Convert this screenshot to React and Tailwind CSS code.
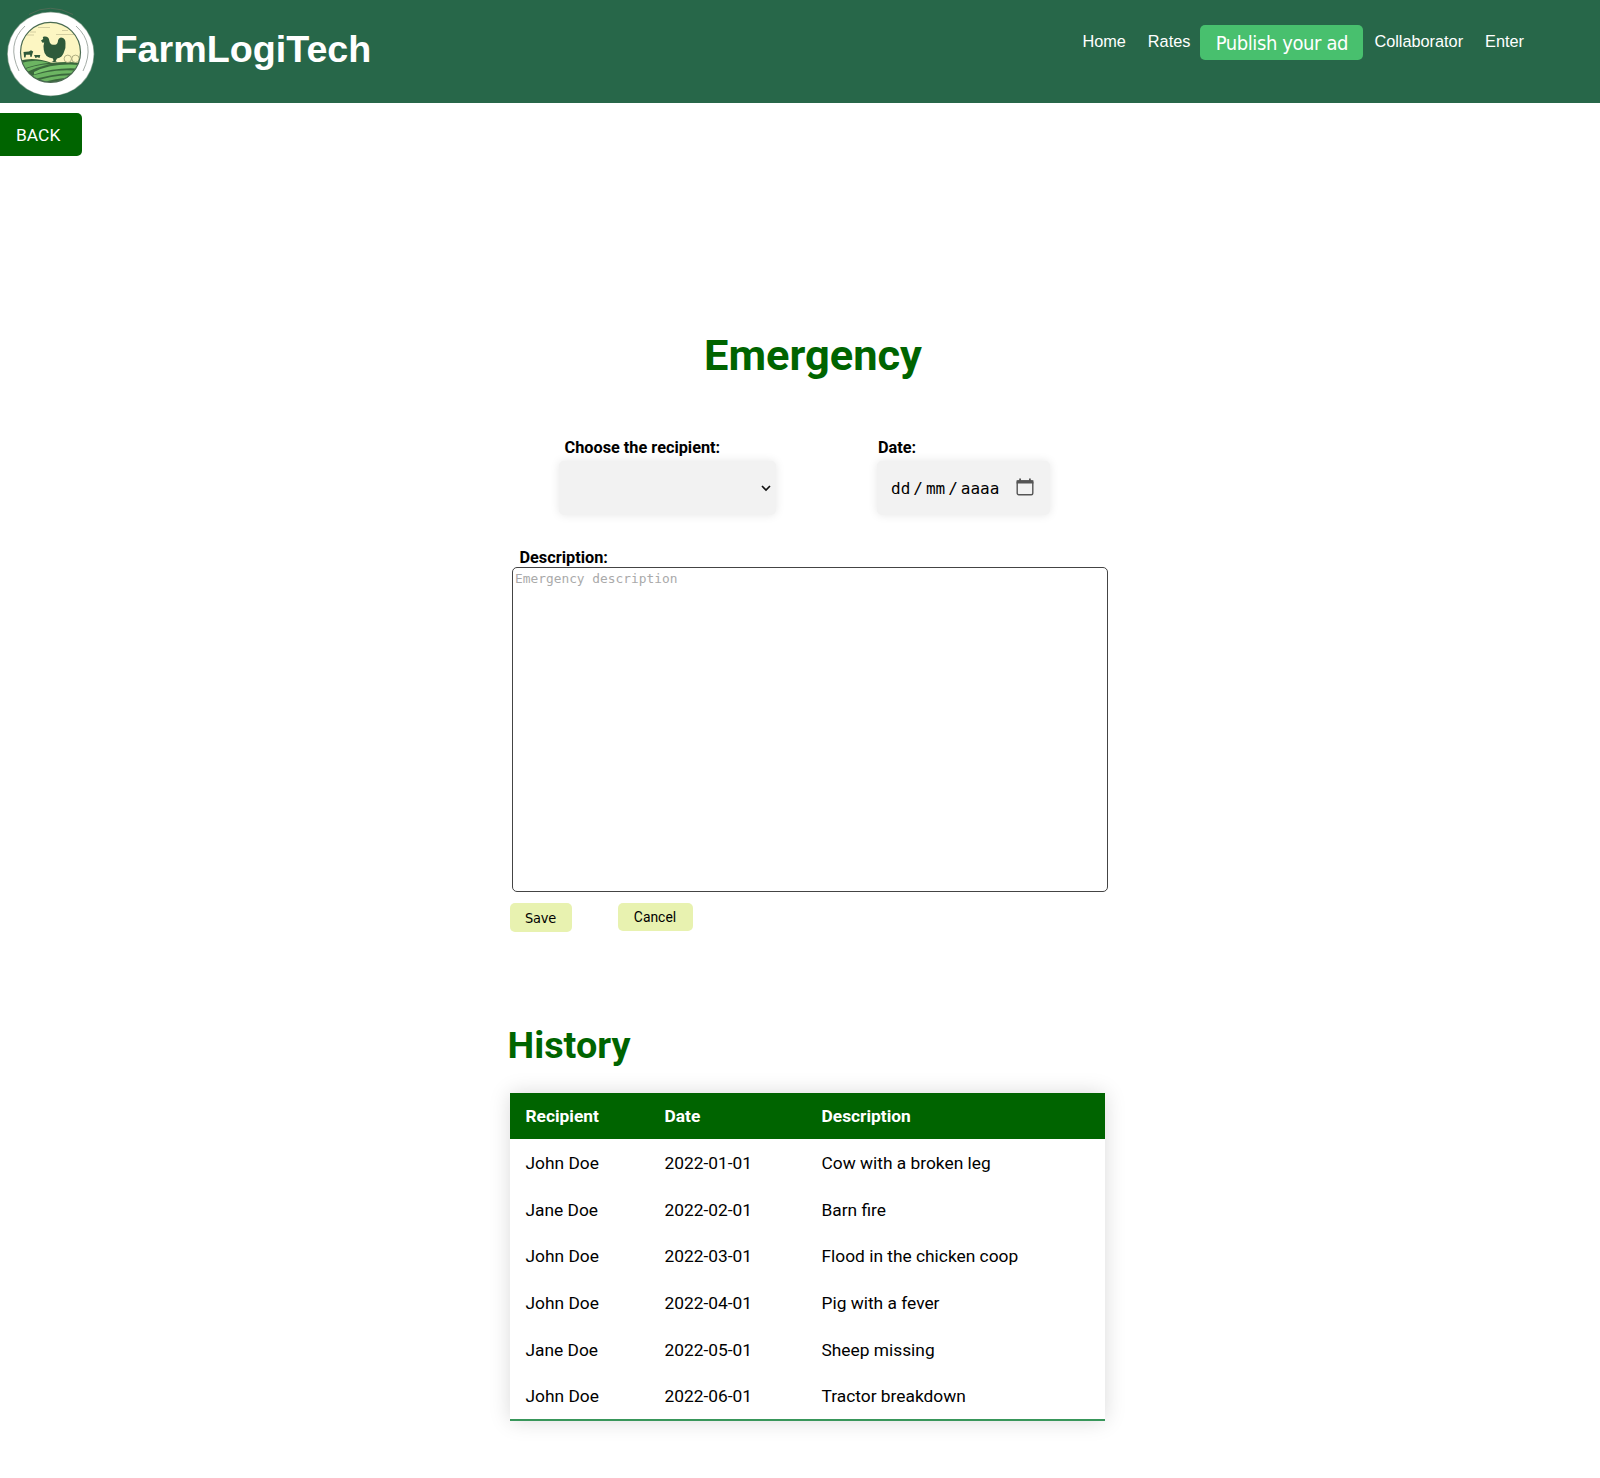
const rows = [
  ["John Doe", "2022-01-01", "Cow with a broken leg"],
  ["Jane Doe", "2022-02-01", "Barn fire"],
  ["John Doe", "2022-03-01", "Flood in the chicken coop"],
  ["John Doe", "2022-04-01", "Pig with a fever"],
  ["Jane Doe", "2022-05-01", "Sheep missing"],
  ["John Doe", "2022-06-01", "Tractor breakdown"],
];

function Logo() {
  return (
    <svg viewBox="0 0 105 103" className="block h-[103px] w-[105px] shrink-0">
      <defs>
        <clipPath id="scene"><circle cx="50.5" cy="52.3" r="30" /></clipPath>
      </defs>
      <path d="M29 14.5 Q50 2 73 14.5" fill="none" stroke="#4d6b55" strokeWidth="1" />
      <ellipse cx="50.7" cy="54" rx="43.6" ry="42.3" fill="#8ba594" />
      <ellipse cx="50.7" cy="54" rx="42.9" ry="41.6" fill="#fff" />
      <path d="M25 26 Q6 44 19 71M76 26 Q96 44 83 71" fill="none" stroke="#9aa39d" strokeWidth="0.9" />
      <g clipPath="url(#scene)">
        <rect x="20" y="20" width="62" height="64" fill="#fcf6c2" />
        <path d="M38 27.5h12M24 35h10M56 34.5h18M30 32h6M62 30.5h6" stroke="#b9b68c" strokeWidth="0.6" />
        <path d="M18 61 Q34 56 52 63 Q68 61 84 63.5 V84 H18z" fill="#3a683c" />
        <path d="M18 64 Q34 58 49 62.8 Q36 64 20 70z" fill="#6cb562" />
        <path d="M20 71 Q34 65 50 64 Q40 66 22 74z" fill="#6cb562" />
        <path d="M34 72 Q54 62 84 65.5 V69 Q58 66 34 74.500z" fill="#78c36c" />
        <path d="M26 78 Q54 67 84 71.5 V74 Q58 71 30 81z" fill="#6cb562" />
        <path d="M34 82 Q56 73 82 76 L80 78.5 Q58 76 40 84z" fill="#6cb562" />
        <g fill="#fcf6c2" stroke="#8f9168" strokeWidth="0.7">
          <circle cx="67.8" cy="58.8" r="3.7" /><circle cx="75.5" cy="58.8" r="3.7" />
        </g>
        <path d="M41 40.5 L43.3 39 Q42 36.300 44.5 36.500 Q48.8 36.200 49.300 40.5 Q49.8 44.5 53 44.800 Q57 45.200 57.800 42 Q58 38.300 61 37.600 Q65.800 38 65.500 43.5 Q66 48 64 52 Q62.500 57.500 57 58.600 L55.5 61.3 L57.5 62.3 H51 L53.5 61 L53 58.600 Q44.500 57.300 43.800 50 Q42.800 46.5 44.2 42.5 L42.500 42.800z" fill="#2f5a3a" />
        <path d="M23.5 52 L29 51.5 L31 50.2 L33.2 51.5 L32.5 53.5 L31.5 57 H30.5 L30 54.8 L26 54.8 L25.5 57.5 H24.200zM34 55H40.3L39.5 58H38.5V57.2H36.5V58H35.500z" fill="#2f5a3a" />
      </g>
      <circle cx="50.5" cy="52.3" r="30" fill="none" stroke="#4a6b52" strokeWidth="1.2" />
    </svg>
  );
}

export default function App() {
  return (
    <div className="min-h-[1478px] bg-white font-['Roboto',sans-serif] text-black">
      <header className="flex h-[103px] items-start bg-[#276749] font-['Liberation_Sans',sans-serif] text-white">
        <Logo />
        <h1 className="mt-[26px] ml-[9.5px] text-[37.7px] leading-[46px] font-bold">FarmLogiTech</h1>
        <nav className="mt-[25px] mr-[65px] ml-auto flex h-[35px] items-start text-[16.3px] leading-[33px]">
          <a className="px-[11px]">Home</a>
          <a className="-mr-px px-[11px]">Rates</a>
          <button className="h-[35px] w-[163px] rounded-[5px] bg-[#48c06e] pt-[2px] font-['DejaVu_Sans_Condensed','DejaVu_Sans',sans-serif] text-[20px] tracking-[-0.4px] whitespace-nowrap">Publish your ad</button>
          <a className="px-[11px]">Collaborator</a>
          <a className="px-[11px]">Enter</a>
        </nav>
      </header>
      <button className="mt-[10px] block h-[43px] w-[82px] rounded-r-[5px] bg-[#006400] pt-[2px] pl-4 text-left text-[17.4px] text-white">BACK</button>
      <main className="mt-[174px] ml-[508px] w-[600px]">
        <h2 className="pl-[196px] text-[43.4px] leading-[52px] font-bold text-[#006400]">Emergency</h2>
        <div className="mt-[55px] flex">
          <div className="ml-[51px] w-[217px]">
            <label className="block h-[24px] pl-[5.5px] text-[16.3px] leading-[22px] font-bold">Choose the recipient:</label>
            <div className="flex h-[54px] items-center justify-end rounded-[5px] bg-[#f2f2f2] pr-[5px] shadow-[0_0_10px_rgba(0,0,0,0.1)]">
              <svg className="h-[8px] w-[10px]" viewBox="0 0 10 8"><path d="M1 2l4 4 4-4" fill="none" stroke="#111" strokeWidth="1.7" /></svg>
            </div>
          </div>
          <div className="ml-[101px] w-[173px]">
            <label className="block h-[24px] pl-[1px] text-[16.3px] leading-[22px] font-bold">Date:</label>
            <div className="flex h-[54px] items-center rounded-[5px] bg-[#f2f2f2] pt-[1px] pl-[14px] font-['DejaVu_Sans_Mono',monospace] text-[16px] shadow-[0_0_10px_rgba(0,0,0,0.1)]">
              <span>dd</span><span className="mx-[3px]">/</span><span>mm</span><span className="mx-[3px]">/</span><span>aaaa</span>
              <svg className="mb-[3px] ml-[17px] h-[18px] w-[18px]" viewBox="0 0 18 18"><rect x="1.2" y="3" width="15.6" height="13.8" rx="1.5" fill="none" stroke="#555" strokeWidth="1.4" /><path d="M0.6 2.2h16.8v3.4H0.600zM3.2 0.5h1.8v3h-1.800zM13 0.5h1.8v3h-1.800z" fill="#555" /></svg>
            </div>
          </div>
        </div>
        <label className="mt-[32px] block h-[20px] pl-[11.5px] text-[16.3px] leading-[21px] font-bold">Description:</label>
        <div className="ml-[4px] h-[325px] w-[596px] rounded-[5px] border border-[#444] pt-[1px] pl-[2px] font-['DejaVu_Sans_Mono',monospace] text-[12.85px] leading-[20px] text-[#aaa]">Emergency description</div>
        <div className="mt-[11px] ml-[1.5px] flex items-start text-[13.9px]">
          <button className="h-[29px] w-[62px] rounded-[5px] bg-[#e8f2b0] pt-[2px] font-['DejaVu_Sans_Condensed','DejaVu_Sans',sans-serif] text-[14.4px] tracking-[-0.2px]">Save</button>
          <button className="ml-[46px] h-[28px] w-[75px] rounded-[5px] bg-[#e8f2b0]">Cancel</button>
        </div>
        <h2 className="mt-[90px] -ml-[0.5px] text-[37.8px] leading-[46px] font-bold text-[#006400]">History</h2>
        <table className="mt-[24.5px] ml-[1.5px] w-[595px] table-fixed border-b-2 border-[#38965a] text-left text-[17.35px] shadow-[0_0_20px_rgba(0,0,0,0.15)]">
          <thead className="bg-[#006400] text-white">
            <tr className="h-[46.5px]">
              <th className="w-[139px] pl-4">Recipient</th>
              <th className="w-[157px] pl-4">Date</th>
              <th className="pl-4">Description</th>
            </tr>
          </thead>
          <tbody>
            {rows.map((r) => (
              <tr key={r[1]} className="h-[46.8px]">
                {r.map((c) => <td key={c} className="pt-px pl-4">{c}</td>)}
              </tr>
            ))}
          </tbody>
        </table>
      </main>
    </div>
  );
}
